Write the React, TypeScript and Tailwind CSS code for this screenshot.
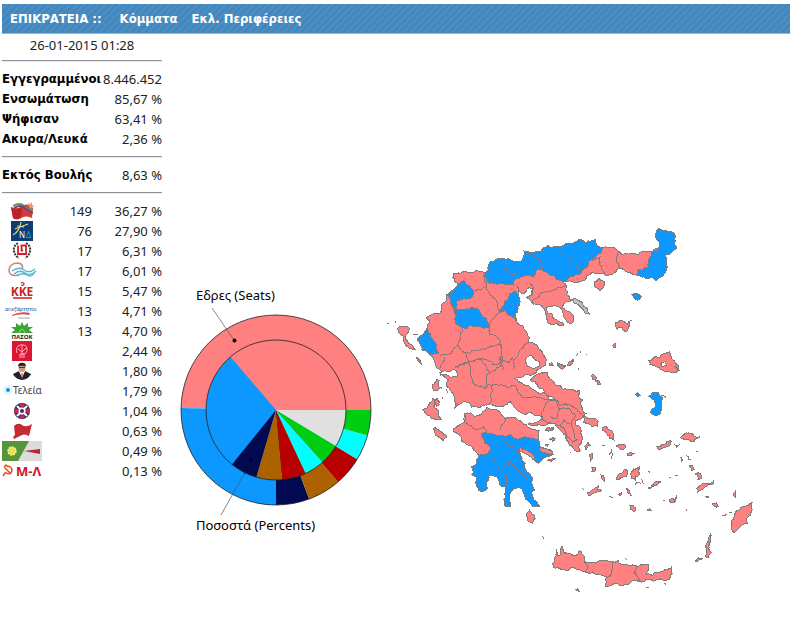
import React from "react";

type Pt = [number, number];

const PINK = "#ff8080";
const BLUE = "#0d98ff";

const parse = (s: string): Pt[] =>
  s.trim().split(/\s+/).map((p) => p.split(",").map(Number) as Pt);

/* Splits an edge at a displaced midpoint; the shift depends only on the
   midpoint, so borders shared by two prefectures stay identical. */
function split(a: Pt, b: Pt, min: number, amp: number): Pt[] {
  const len = Math.hypot(b[0] - a[0], b[1] - a[1]);
  if (len < min) return [];
  const mx = (a[0] + b[0]) / 2;
  const my = (a[1] + b[1]) / 2;
  const h = Math.sin(mx * 12.9898 + my * 78.233) * 43758.5453;
  const k = Math.sin(mx * 39.346 + my * 11.135) * 24634.6345;
  const m: Pt = [
    mx + (h - Math.floor(h) - 0.5) * len * amp,
    my + (k - Math.floor(k) - 0.5) * len * amp,
  ];
  return [...split(a, m, min, amp), m, ...split(m, b, min, amp)];
}

function coast(s: string, closed: boolean): string {
  const pts = parse(s);
  const out: Pt[] = [];
  pts.forEach((p, i) => {
    out.push(p);
    const next = i + 1 < pts.length ? pts[i + 1] : closed ? pts[0] : null;
    if (next) out.push(...split(p, next, 7, 0.38));
  });
  return "M" + out.map((p) => p[0].toFixed(1) + " " + p[1].toFixed(1)).join("L") + (closed ? "Z" : "");
}

type AreaProps = { pts: string; fill?: string };
const Area = ({ pts, fill = PINK }: AreaProps) => (
  <path d={coast(pts, true)} fill={fill} stroke="#7d7d7d" strokeWidth="1" vectorEffect="non-scaling-stroke" />
);
const Border = ({ pts }: { pts: string }) => (
  <path d={coast(pts, false)} fill="none" stroke="#8a7777" strokeWidth="1" vectorEffect="non-scaling-stroke" />
);
/* Survey sheets are drawn at three times the map scale. */
const Sheet = ({ x, y, children }: { x: number; y: number; children: React.ReactNode }) => (
  <g transform={`translate(${x} ${y}) scale(0.33333)`}>{children}</g>
);

const MAINLAND =
  "219,162 240,162 262,156 275,159 300,155 315,158 330,126 370,117 400,126 429,117 432,93 471,93 486,96 489,84 525,81 540,81 576,72 600,57 639,63 645,57 651,75 669,84 690,81 720,96 726,105 759,102 804,93 810,96 834,87 837,66 828,39 834,27 876,36 888,48 891,84 876,96 855,105 861,144 834,177 828,183 816,171 774,165 741,156 714,147 675,165 654,159 636,156 621,165 615,180 591,189 567,183 549,186 558,204 564,216 561,225 570,240 579,240 564,246 546,261 555,270 579,285 582,300 573,312 558,300 549,279 537,261 519,258 498,267 504,279 525,297 549,309 549,318 525,312 504,309 498,291 495,267 471,255 450,240 440,231 456,225 459,204 444,205 440,213 429,222 414,214 414,225 418,240 414,261 405,285 411,306 429,318 441,339 447,366 471,375 487,395 500,420 496,436 475,448 468,458 450,466 425,472 405,476 425,490 450,500 470,515 495,520 505,540 530,545 560,555 597,561 618,580 594,597 585,612 606,660 600,692 580,685 565,665 555,645 540,630 520,605 490,618 475,612 445,612 478,602 485,590 440,582 410,570 390,545 380,555 355,560 330,550 300,562 275,562 255,545 225,562 220,520 200,500 205,480 188,465 180,450 165,430 150,405 126,390 114,355 128,344 141,325 150,306 141,291 180,279 200,240 200,225 225,205 235,195 225,185";

function GreeceMap() {
  return (
    <svg viewBox="380 220 380 380" className="h-[380px] w-[380px] shrink-0" role="img" aria-label="Χάρτης" shapeRendering="crispEdges">
      <Sheet x={380} y={220}>
        <Area pts={MAINLAND} />
        <Area fill={BLUE} pts="315,158 330,126 370,117 400,126 429,117 432,93 471,93 486,96 489,84 525,81 540,81 576,72 600,57 639,63 645,57 651,75 669,84 664,98 640,115 610,148 585,165 560,182 549,186 535,180 510,165 485,150 465,155 460,172 415,175 400,195 370,190 330,190 310,168" />
        <Area fill={BLUE} pts="834,87 837,66 828,39 834,27 876,36 888,48 891,84 876,96 855,105 861,144 834,177 828,183 816,171 774,165 775,150 805,140 808,115 815,95" />
        <Area fill={BLUE} pts="200,225 215,218 235,195 250,182 262,195 280,212 272,235 240,240 230,245 228,270 215,255 212,240" />
        <Area fill={BLUE} pts="222,272 245,268 275,262 300,275 320,298 328,322 300,320 265,315 262,325 235,315 225,295 230,285" />
        <Area fill={BLUE} pts="405,213 418,232 414,261 402,285 411,306 385,285 375,272 355,272 370,258 385,235 390,220" />
        <Area fill={BLUE} pts="141,325 150,340 158,358 170,375 175,400 150,405 126,390 114,355 128,344" />
        <Area fill="#c0c0c0" pts="580,237 595,240 608,253 618,262 628,282 620,282 606,266 596,255 582,250" />
        <Border pts="315,165 320,200 285,215" />
        <Border pts="320,195 330,225 350,245 356,270" />
        <Border pts="410,195 415,214" />
        <Border pts="328,322 345,290 375,272" />
        <Border pts="245,320 235,370 215,400 180,408" />
        <Border pts="235,375 265,400 290,392 330,380 365,372" />
        <Border pts="328,322 330,345 360,360 365,400 368,450" />
        <Border pts="447,366 420,390 400,420 400,448" />
        <Border pts="225,445 265,425 300,415 320,420 345,435 368,420" />
        <Border pts="265,425 255,400" />
        <Border pts="180,445 195,410" />
        <Border pts="212,240 218,262 228,272" />
        <Border pts="375,120 380,150 405,165 415,175" />
        <Border pts="445,92 480,120 492,150" />
        <Border pts="545,82 548,105 580,125 610,148" />
        <Border pts="635,120 660,112 668,150 675,165" />
        <Border pts="720,96 708,120 718,148" />
        <Border pts="455,245 480,222 520,210 556,200" />
        <Border pts="450,190 460,205 455,225" />
        <Border pts="22,308 25,312" />
        <Border pts="45,305 48,308" />
        <Area pts="52,325 72,320 90,325 82,340 75,348 85,370 100,380 108,388 85,382 72,365 65,345 55,335" />
        <Border pts="98,343 115,346" />
        <Area pts="110,412 116,418 123,430 117,426" />
      </Sheet>

      <Sheet x={410} y={350}>
        <path d="M90 68 105 62 120 66 128 58 140 62 142 78 122 82 110 74 92 75ZM345 30 352 20 365 15 372 28 388 35 388 48 372 56 352 48Z" fill="#fff" stroke="#7d7d7d" strokeWidth="1" vectorEffect="non-scaling-stroke" />
        <Border pts="175,35 180,70 192,102 225,115 230,75 245,65 270,50 275,15" />
        <Border pts="175,35 142,52" />
        <Border pts="175,35 215,28 230,50 240,70" />
        <Border pts="225,112 240,105 275,105 310,105 325,130 370,140 405,150 445,155 445,205" />
        <Border pts="240,105 243,150 238,165" />
        <Border pts="270,25 300,38 310,20" />
        <Border pts="445,205 465,215 455,228" />
        <Area pts="165,190 195,200 230,172 260,180 285,205 320,205 350,225 388,242 385,268 390,290 428,305 425,315 400,320 300,300 205,317 185,290 155,275 155,262 130,240 165,215" />
        <Area fill={BLUE} pts="215,250 235,250 260,258 300,252 310,262 345,260 385,268 390,290 405,308 430,314 400,325 385,340 372,318 350,300 330,292 330,310 345,345 358,370 365,400 375,420 365,430 370,450 388,470 370,470 345,440 335,415 312,415 300,440 300,470 285,468 288,440 285,410 270,405 260,380 235,378 228,400 232,415 218,425 200,410 200,385 185,375 185,350 200,335 205,315 240,300 225,280" />
        <Area pts="388,290 405,296 428,306 424,313 402,308 390,300" />
        <Border pts="165,195 170,220 200,240 220,230 230,250" />
        <Border pts="270,240 290,205" />
        <Border pts="235,310 265,355 285,375 285,410" />
        <Border pts="290,260 300,290 330,310" />
        <Border pts="265,355 300,335 325,360 345,380 360,382" />
        <Area pts="350,490 358,480 372,495 375,505 368,520 352,505" />
        <Area pts="68,105 80,88 88,92 85,120 72,122" />
        <Area pts="38,180 50,175 55,165 65,155 68,145 75,155 72,170 85,180 93,208 75,208 60,198 50,195" />
        <Area pts="75,152 82,145 88,165 80,168" />
        <Area pts="70,235 75,232 88,242 110,262 100,272 85,260 75,248" />
        <Border pts="92,112 96,116" />
        <Border pts="96,140 98,146" />
        <Border pts="108,118 112,128" />
        <Area pts="20,22 26,30 33,40 24,34" />
        <Area pts="420,42 425,38 430,46 422,46" />
        <Area pts="442,38 452,46 468,48 458,56 446,50" />
        <Area pts="420,268 430,262 436,266 428,275" />
        <Area pts="406,285 414,284 412,292" />
        <Area pts="410,332 425,328 436,325 422,334" />
        <Area pts="405,240 415,232 432,235 422,242" />
        <Border pts="205,420 212,426" />
      </Sheet>

      {/* Euboea and the Aegean */}
      <Sheet x={550} y={340}>
        <Area pts="-52,112 -30,100 -8,98 8,122 22,136 50,148 88,152 86,170 98,178 94,200 102,218 88,222 80,205 60,195 30,197 18,180 0,170 -15,160 -20,148 -38,135 -60,120" />
        <Area pts="0,180 20,182 26,205 55,204 77,228 65,245 72,270 82,300 68,306 50,290 44,268 30,256 12,250 0,248 -20,240 -18,205" />
        <Border pts="0,228 20,235 28,205" />
        <Border pts="30,256 40,240 60,252" />
        <Border pts="0,268 12,262" />
        <Area pts="98,228 110,232 135,234 142,240 142,258 125,260 112,250 100,248" />
        <Area pts="158,262 168,260 176,268 190,280 192,300 180,295 170,280 158,272" />
        <Area pts="198,318 210,312 228,320 218,330" />
        <Area pts="232,345 240,336 254,340 242,348" />
        <Area pts="104,320 114,306 120,316 108,330" />
        <Area pts="118,345 126,340 128,356 120,366" />
        <Area pts="125,382 136,382 138,392 126,394" />
        <Area pts="153,405 160,408 164,425 156,418" />
        <Area pts="112,458 125,452 145,438 142,448 154,452 130,460 118,468" />
        <Area pts="198,415 214,400 222,390 232,392 230,408 215,412 200,418" />
        <Area pts="242,402 250,386 268,380 270,402 256,422 246,415" />
        <Area pts="230,446 238,450 244,468 234,460" />
        <Area pts="205,463 214,458 216,464" />
        <Area pts="240,498 250,498 258,508 252,516 242,508" />
        <Area pts="292,510 300,506 306,512" />
        <Area pts="294,444 310,432 318,424 332,426 312,438 300,446" />
        <Area pts="320,320 345,312 364,304 360,316 340,322 324,328" />
        <Area pts="392,294 404,282 420,280 432,288 450,290 440,296 428,306 410,300" />
        <Area pts="296,62 312,52 330,54 340,40 358,36 364,52 376,68 388,92 370,98 345,96 326,82 300,74" />
        <path d="M332 70 345 65 350 75 335 80ZM374 80 380 78 382 88Z" fill="#fff" stroke="#7d7d7d" strokeWidth="1" vectorEffect="non-scaling-stroke" />
        <Area fill={BLUE} pts="296,170 310,156 325,158 338,172 336,210 318,228 302,218 306,208 318,200 314,180" />
        <Border pts="334,166 348,172" />
        <Area fill={BLUE} pts="256,164 262,158 270,166 262,170" />
        <Area pts="124,106 132,104 140,114 138,122 128,118" />
        <Area pts="138,124 146,120 154,132 144,134" />
        <Area pts="188,16 196,10 198,18 192,24" />
        <Area pts="22,72 32,74 44,80 38,88 28,82" />
        <Area pts="52,76 60,64 70,58 66,72" />
        <Border pts="78,48 84,40" />
        <Border pts="90,32 92,38" />
        <Border pts="108,42 110,46" />
        <Area pts="0,70 6,66 8,74 0,78" />
        <Area pts="418,378 426,376 432,388 424,390" />
        <Area pts="436,402 446,398 456,410 444,418" />
        <Area pts="440,444 460,430 492,422 490,432 466,440 444,456" />
        <Area pts="466,468 476,468 474,474" />
        <Area pts="486,492 500,488 506,500 494,500" />
        <Border pts="516,526 532,522" />
        <Border pts="538,518 546,518" />
        <Area pts="550,466 556,454 558,474" />
        <Area pts="608,488 606,512 590,540 592,550 570,562 552,578 544,566 545,540 556,518 580,500" />
        <Area pts="358,480 366,474 374,480 380,466 378,482 364,488" />
        <Border pts="340,482 344,482" />
        <Border pts="296,392 300,398" />
        <Border pts="356,412 362,412" />
        <Border pts="376,408 384,408" />
        <Border pts="178,344 184,334 188,346 184,356" />
        <Border pts="156,316 164,318" />
        <Border pts="176,468 188,474" />
        <Border pts="254,436 262,426 272,430" />
        <Border pts="274,418 280,432" />
        <Border pts="372,314 380,322 390,314" />
        <Border pts="390,350 394,364 396,352" />
        <Border pts="408,344 416,360 422,360" />
        <Border pts="438,334 444,336" />
        <Border pts="408,508 412,514" />
        <Border pts="96,446 102,448" />
        <Border pts="60,336 62,340" />
        <Border pts="84,84 86,90" />
      </Sheet>

      {/* Thasos, Samothrace, Lemnos */}
      <Sheet x={530} y={220}>
        <Area pts="192,186 205,176 222,184 222,200 208,212 192,200" />
        <Area fill={BLUE} pts="305,224 320,220 334,230 330,238 312,234" />
        <Area pts="256,308 270,302 285,308 292,312 304,300 298,318 294,332 282,332 276,322 262,328 256,320" />
      </Sheet>

      {/* Crete, Karpathos */}
      <Sheet x={520} y={480}>
        <Area pts="104,236 108,208 112,228 120,226 126,198 134,220 150,222 168,226 178,212 186,222 194,236 196,248 220,246 256,240 294,240 298,250 320,252 350,258 372,252 386,252 380,282 396,286 420,276 444,268 454,262 456,280 448,298 430,300 400,304 360,306 320,314 258,320 260,290 235,284 200,278 180,270 140,270 100,264" />
        <Border pts="194,240 202,258 196,278" />
        <Border pts="280,242 276,268 262,292" />
        <Border pts="350,258 342,278 362,306" />
        <Area pts="572,158 572,180 566,200 574,218 564,234 556,230 560,206 566,178" />
        <Area pts="526,244 536,234 548,236 534,244" />
        <Area pts="166,328 174,326 178,336" />
        <Border pts="68,168 72,178" />
        <Border pts="316,236 320,238" />
        <Border pts="378,322 386,324" />
        <Border pts="434,310 438,314" />
      </Sheet>
    </svg>
  );
}

const SEATS = [149, 76, 17, 17, 15, 13, 13];
const PERCENTS = [36.27, 27.9, 6.31, 6.01, 5.47, 4.71, 4.7, 8.63];
const COLORS = [PINK, BLUE, "#000a50", "#ad6200", "#b80000", "#00ffff", "#00cc10", "#e0e0e0"];

function slices(values: number[], r: number) {
  const total = values.reduce((a, b) => a + b, 0);
  let at = 0;
  return values.map((v, i) => {
    const a = (at / total) * 2 * Math.PI;
    at += v;
    const b = (at / total) * 2 * Math.PI;
    const p = (t: number) => `${276 + r * Math.cos(t)} ${410 - r * Math.sin(t)}`;
    return <path key={i} fill={COLORS[i]} d={`M276 410L${p(a)}A${r} ${r} 0 ${b - a > Math.PI ? 1 : 0} 0 ${p(b)}Z`} />;
  });
}

function Pie() {
  return (
    <svg viewBox="175 280 205 260" className="h-[260px] w-[205px] shrink-0" role="img" aria-label="Εδρες (Seats), Ποσοστά (Percents)">
      {slices(SEATS, 95)}
      <circle cx="276" cy="410" r="95" fill="none" stroke="#222" strokeWidth="0.8" />
      {slices(PERCENTS, 70)}
      <circle cx="276" cy="410" r="70" fill="none" stroke="#222" strokeWidth="0.8" />
      <path d="M212 308 234 340M221 515 244 474" stroke="#555" strokeWidth="0.7" />
      <path d="M244 474 251 460" stroke="#000838" strokeWidth="0.7" />
      <circle cx="234.500" cy="340.500" r="2" />
      <circle cx="251" cy="460" r="2" fill="#000030" />
      <g className="font-['Noto_Sans',sans-serif] text-[13px]">
        <text x="196" y="300">Εδρες (Seats)</text>
        <text x="196" y="530">Ποσοστά (Percents)</text>
      </g>
    </svg>
  );
}

const LOGOS: React.ReactNode[] = [
  <>
    <path d="M11 6Q17 9 22 5T33 7L32 17Q26 14 21 17T13 17Z" fill="#d63a36" />
    <path d="M11 6Q17 10 22 6L21 17Q16 19 13 17Z" fill="#b9242b" />
    <path d="M13 5Q20 1 24 5T33 9" fill="none" stroke="#5a9a4a" strokeWidth="2" />
    <path d="M14 7Q21 3 25 7T33 12" fill="none" stroke="#76408c" strokeWidth="2" />
    <path d="M28 2 30 3 32 1 32 4 35 5 32 6 31 8 29 6Z" fill="#e89b6a" />
  </>,
  <>
    <rect x="11" width="22" height="20" fill="#0c3e73" />
    <path d="M13 14Q20 10 21 1M15 8 28 3M17 5 24 6" stroke="#e3d67a" strokeWidth="1.2" fill="none" />
    <text x="19" y="17" fontSize="8" fill="#fff">Ν</text>
    <text x="26" y="17" fontSize="8" fill="#25a9e8">Δ</text>
  </>,
  <>
    <path d="M18 2Q13 5 14 10T19 17M26 2Q31 5 30 10T25 17" fill="none" stroke="#333" strokeWidth="2" strokeDasharray="2 1" />
    <path d="M18 4.500V13H26V4.500H21.500V9.500H23" fill="none" stroke="#d21e2b" strokeWidth="1.800" />
  </>,
  <>
    <path d="M19 14Q9 16 9 9Q10 2 18 2Q24 3 22 8" fill="none" stroke="#cf8575" strokeWidth="1.500" />
    <path d="M12 10Q19 5 24 9T35 8M14 13Q20 8 25 12T36 10M17 15Q22 11 27 14T34 12" fill="none" stroke="#54b9d8" strokeWidth="1.300" />
  </>,
  <>
    <text x="22" y="15" fontSize="12" fontWeight="700" textAnchor="middle" fill="#cf1f1b">KKE</text>
    <path d="M13 17H32M21 2Q24 1 24 3T21 4" stroke="#cf1f1b" strokeWidth="1.300" fill="none" />
  </>,
  <>
    <text x="5" y="10" fontSize="6" fontStyle="italic" fill="#285da8">ανεξάρτητοι</text>
    <path d="M12 14Q20 10 30 12L29 14Q21 12 12 15Z" fill="#d94b49" />
    <path d="M18 17H30" stroke="#8ea9cf" />
  </>,
  <>
    <path d="M22 1 24 5 28 2 28 6 33 6 29 9 33 12H11L15 9 11 6 16 6 16 2 20 5Z" fill="#39a535" />
    <path d="M19 12Q22 4 25 12" fill="none" stroke="#a8da72" />
    <text x="22" y="18" fontSize="6" fontWeight="700" textAnchor="middle" fill="#172c24">ΠΑΣΟΚ</text>
  </>,
  <>
    <rect x="12" width="20" height="20" fill="#dc1736" />
    <path d="M22 4V17M20 17V13H24V17M17 12Q15 6 20 4Q27 3 27 8T23 13M18 8 22 11 26 7" fill="none" stroke="#ffb0b7" />
  </>,
  <>
    <path d="M13 13 19 10 22 15 25 10 31 13Q29 18 22 19Q15 18 13 13Z" fill="#222227" />
    <path d="M19 10H25L22 17Z" fill="#fff" />
    <ellipse cx="22" cy="6.500" rx="3.500" ry="4.500" fill="#d49b7a" />
    <path d="M18.500 5Q18.500 2 22 2T25.500 5Q22 3.500 18.500 5M19 6.500H25" fill="#222" stroke="#222" strokeWidth="0.8" />
    <path d="M22 12V17" stroke="#c42028" />
  </>,
  <>
    <circle cx="8" cy="9" r="5" fill="#e5f4fb" />
    <circle cx="8" cy="9" r="2" fill="#1497d4" />
    <text x="13" y="13" fontSize="10" fill="#444">Τελεία</text>
  </>,
  <>
    <circle cx="22" cy="10" r="8" fill="#263773" />
    <path d="M22 10 19 2.500H25ZM22 10 19 17.500H25ZM22 10 14.500 7V13ZM22 10 29.500 7V13Z" fill="#cd283e" />
    <path d="M17 5 27 15M27 5 17 15" stroke="#fff" strokeWidth="2" />
    <circle cx="22" cy="10" r="3.500" fill="#fff" />
    <circle cx="22" cy="10" r="2" fill="#263773" />
  </>,
  <path d="M14 5Q18 1 22 4T32 3L29 15Q24 12 20 15L14 18 13 16 15 14Z" fill="#c52b30" />,
  <>
    <rect x="2" width="40" height="20" fill="#dcdcdc" />
    <path d="M2 0H29L18 20H2Z" fill="#56953a" />
    <circle cx="12" cy="10" r="4" fill="#f0df53" stroke="#f2eb99" strokeWidth="1.500" strokeDasharray="2 1" />
    <path d="M24 10 40 8V13Z" fill="#bd2437" />
  </>,
  <>
    <path d="M4 6 11 13M4 6 6 4 8 6M8 5Q14 7 11 12Q8 14 5 11M5 12 3 15" fill="none" stroke="#dc5424" strokeWidth="1.500" />
    <text x="16" y="15" fontSize="13" fontWeight="700" fill="#cf171d">Μ-Λ</text>
  </>,
];

const PARTIES: [string, string, string][] = [
  ["ΣΥΡΙΖΑ", "149", "36,27 %"],
  ["Νέα Δημοκρατία", "76", "27,90 %"],
  ["Χρυσή Αυγή", "17", "6,31 %"],
  ["Το Ποτάμι", "17", "6,01 %"],
  ["ΚΚΕ", "15", "5,47 %"],
  ["Ανεξάρτητοι Έλληνες", "13", "4,71 %"],
  ["ΠΑΣΟΚ", "13", "4,70 %"],
  ["Κίνημα", "", "2,44 %"],
  ["Ένωση Κεντρώων", "", "1,80 %"],
  ["Τελεία", "", "1,79 %"],
  ["ΛΑΟΣ", "", "1,04 %"],
  ["ΑΝΤΑΡΣΥΑ", "", "0,63 %"],
  ["Πράσινοι", "", "0,49 %"],
  ["Μ-Λ", "", "0,13 %"],
];

const TURNOUT: [string, string][] = [
  ["Εγγεγραμμένοι", "8.446.452"],
  ["Ενσωμάτωση", "85,67 %"],
  ["Ψήφισαν", "63,41 %"],
  ["Ακυρα/Λευκά", "2,36 %"],
];

function Stats({ rows }: { rows: [string, string][] }) {
  return (
    <table className="w-full">
      <tbody>
        {rows.map(([label, value]) => (
          <tr key={label} className="h-5">
            <th scope="row" className="p-0 text-left font-['DejaVu_Sans_Condensed','DejaVu_Sans',sans-serif] text-[13px] leading-5 font-bold whitespace-nowrap text-black">{label}</th>
            <td className="p-0 text-right">{value}</td>
          </tr>
        ))}
      </tbody>
    </table>
  );
}

const Rule = () => <hr className="my-[7px] border-t border-b border-t-[#8f8f97] border-b-[#ececec]" />;

export default function App() {
  return (
    <div className="min-h-screen bg-white pt-1 pl-0.5 font-['Noto_Sans',sans-serif] text-[13px] leading-5 text-[#222]">
      <header className="flex h-[30px] items-center border-b border-[#8fb8da] bg-[#468ac0] bg-[repeating-linear-gradient(135deg,#4286bc_0px,#4286bc_2px,#4a8ec4_3px,#4a8ec4_5px)] pl-2 font-['DejaVu_Sans_Condensed','DejaVu_Sans',sans-serif] font-bold text-white">
        <h1>ΕΠΙΚΡΑΤΕΙΑ ::</h1>
        <nav className="ml-[18px] flex gap-3.5">
          <a href="#parties">Κόμματα</a>
          <a href="#regions">Εκλ. Περιφέρειες</a>
        </nav>
      </header>
      <main className="flex items-start">
        <aside className="w-40 shrink-0 pt-[3px]">
          <p className="text-center leading-4">26-01-2015 01:28</p>
          <Rule />
          <Stats rows={TURNOUT} />
          <Rule />
          <Stats rows={[["Εκτός Βουλής", "8,63 %"]]} />
          <Rule />
          <table className="w-full">
            <tbody>
              {PARTIES.map(([name, seats, share], i) => (
                <tr key={name} className="h-5">
                  <td className="w-11 p-0">
                    <svg viewBox="2 0 44 20" className="block h-5 w-11" role="img" aria-label={name}>{LOGOS[i]}</svg>
                  </td>
                  <td className="p-0 text-right">{seats}</td>
                  <td className="w-[70px] p-0 text-right">{share}</td>
                </tr>
              ))}
            </tbody>
          </table>
        </aside>
        <section className="flex items-start pl-[13px]">
          <div className="pt-[246px]">
            <Pie />
          </div>
          <div className="pt-[186px]">
            <GreeceMap />
          </div>
        </section>
      </main>
    </div>
  );
}
